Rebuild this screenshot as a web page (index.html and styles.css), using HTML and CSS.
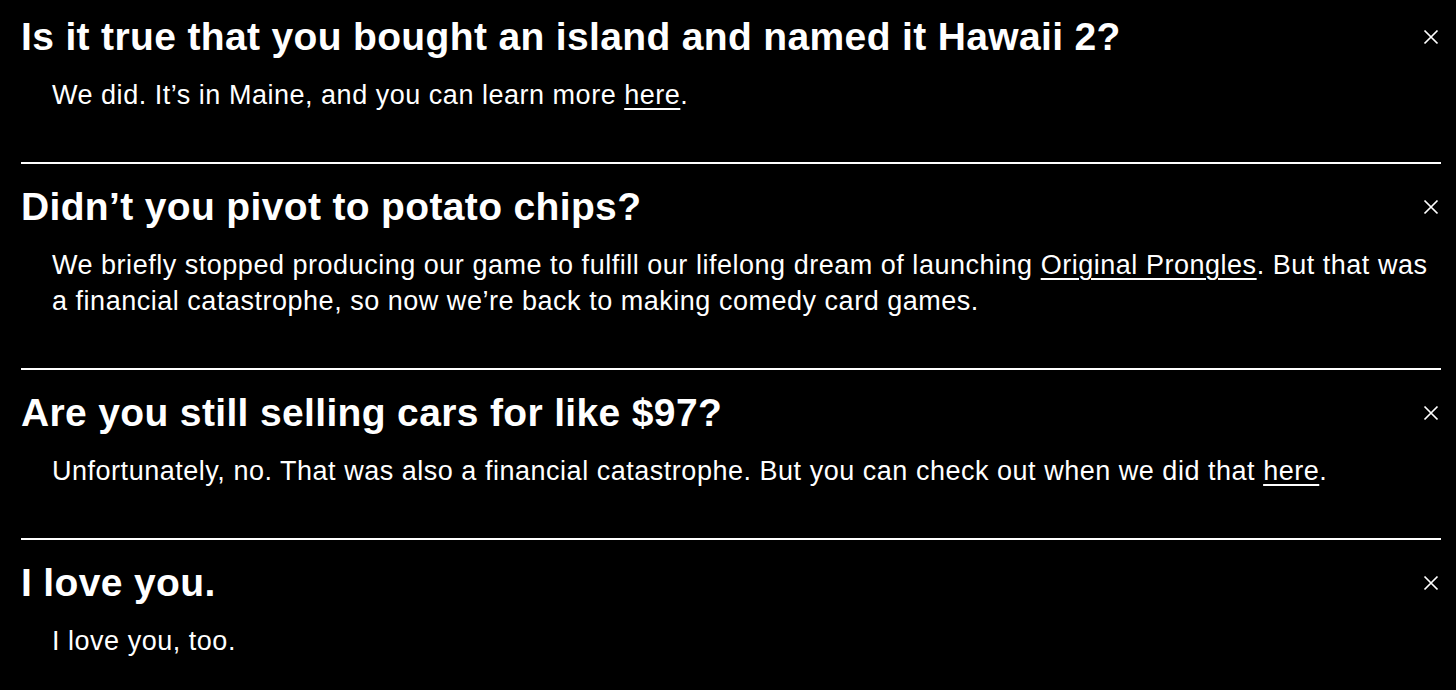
FILE: index.html
```html
<!DOCTYPE html>
<html lang="en">

<head>
    <meta charset="UTF-8">
    <meta name="viewport" content="width=device-width, initial-scale=1.0">
    <title>FAQ</title>
    <link rel="stylesheet" href="styles.css">
</head>

<body>
    <div class="faq">
        <!-- Each item is open: question row + answer -->
        <div class="faq-item">
            <div class="question">
                <h2>Is it true that you bought an island and named it Hawaii 2?</h2>
                <button class="close-btn" aria-label="Close">
                    <svg width="16" height="16" viewBox="0 0 16 16"><path d="M1.5 1.5L14.5 14.5M14.5 1.5L1.5 14.5" /></svg>
                </button>
            </div>
            <p class="answer">We did. It’s in Maine, and you can learn more <a href="#">here</a>.</p>
        </div>

        <div class="faq-item">
            <div class="question">
                <h2>Didn’t you pivot to potato chips?</h2>
                <button class="close-btn" aria-label="Close">
                    <svg width="16" height="16" viewBox="0 0 16 16"><path d="M1.5 1.5L14.5 14.5M14.5 1.5L1.5 14.5" /></svg>
                </button>
            </div>
            <p class="answer">We briefly stopped producing our game to fulfill our lifelong dream of launching <a href="#">Original Prongles</a>. But that was a financial catastrophe, so now we’re back to making comedy card games.</p>
        </div>

        <div class="faq-item">
            <div class="question">
                <h2>Are you still selling cars for like $97?</h2>
                <button class="close-btn" aria-label="Close">
                    <svg width="16" height="16" viewBox="0 0 16 16"><path d="M1.5 1.5L14.5 14.5M14.5 1.5L1.5 14.5" /></svg>
                </button>
            </div>
            <p class="answer">Unfortunately, no. That was also a financial catastrophe. But you can check out when we did that <a href="#">here</a>.</p>
        </div>

        <div class="faq-item">
            <div class="question">
                <h2>I love you.</h2>
                <button class="close-btn" aria-label="Close">
                    <svg width="16" height="16" viewBox="0 0 16 16"><path d="M1.5 1.5L14.5 14.5M14.5 1.5L1.5 14.5" /></svg>
                </button>
            </div>
            <p class="answer">I love you, too.</p>
        </div>
    </div>
</body>

</html>
```

FILE: styles.css
```css
* {
    margin: 0;
    padding: 0;
    box-sizing: border-box;
    font-family: "Helvetica Neue", Helvetica, "Liberation Sans", Arial, sans-serif;
}

body {
    background-color: #000;
    color: #fff;
}

.faq {
    padding: 0 15px 0 21px;
}

.faq-item {
    padding: 20px 0 49px;
    border-bottom: 2px solid #fff;
}

.faq-item:first-child {
    padding-top: 14px;
}

.faq-item:last-child {
    border-bottom: none;
}

.question {
    display: flex;
    justify-content: space-between;
    align-items: center;
}

.question h2 {
    font-size: 39px;
    line-height: 46px;
    font-weight: bold;
    letter-spacing: 0.35px;
}

.close-btn {
    background: none;
    border: none;
    width: 20px;
    height: 20px;
    display: flex;
    align-items: center;
    justify-content: center;
    cursor: pointer;
}

.close-btn svg path {
    stroke: #fff;
    stroke-width: 1.7;
    fill: none;
}

.answer {
    margin-top: 17px;
    padding-left: 31px;
    font-size: 27px;
    line-height: 36px;
    letter-spacing: 0.52px;
}

.answer a {
    color: #fff;
    text-decoration: underline;
    text-decoration-thickness: 2px;
    text-underline-offset: 4px;
}
```
